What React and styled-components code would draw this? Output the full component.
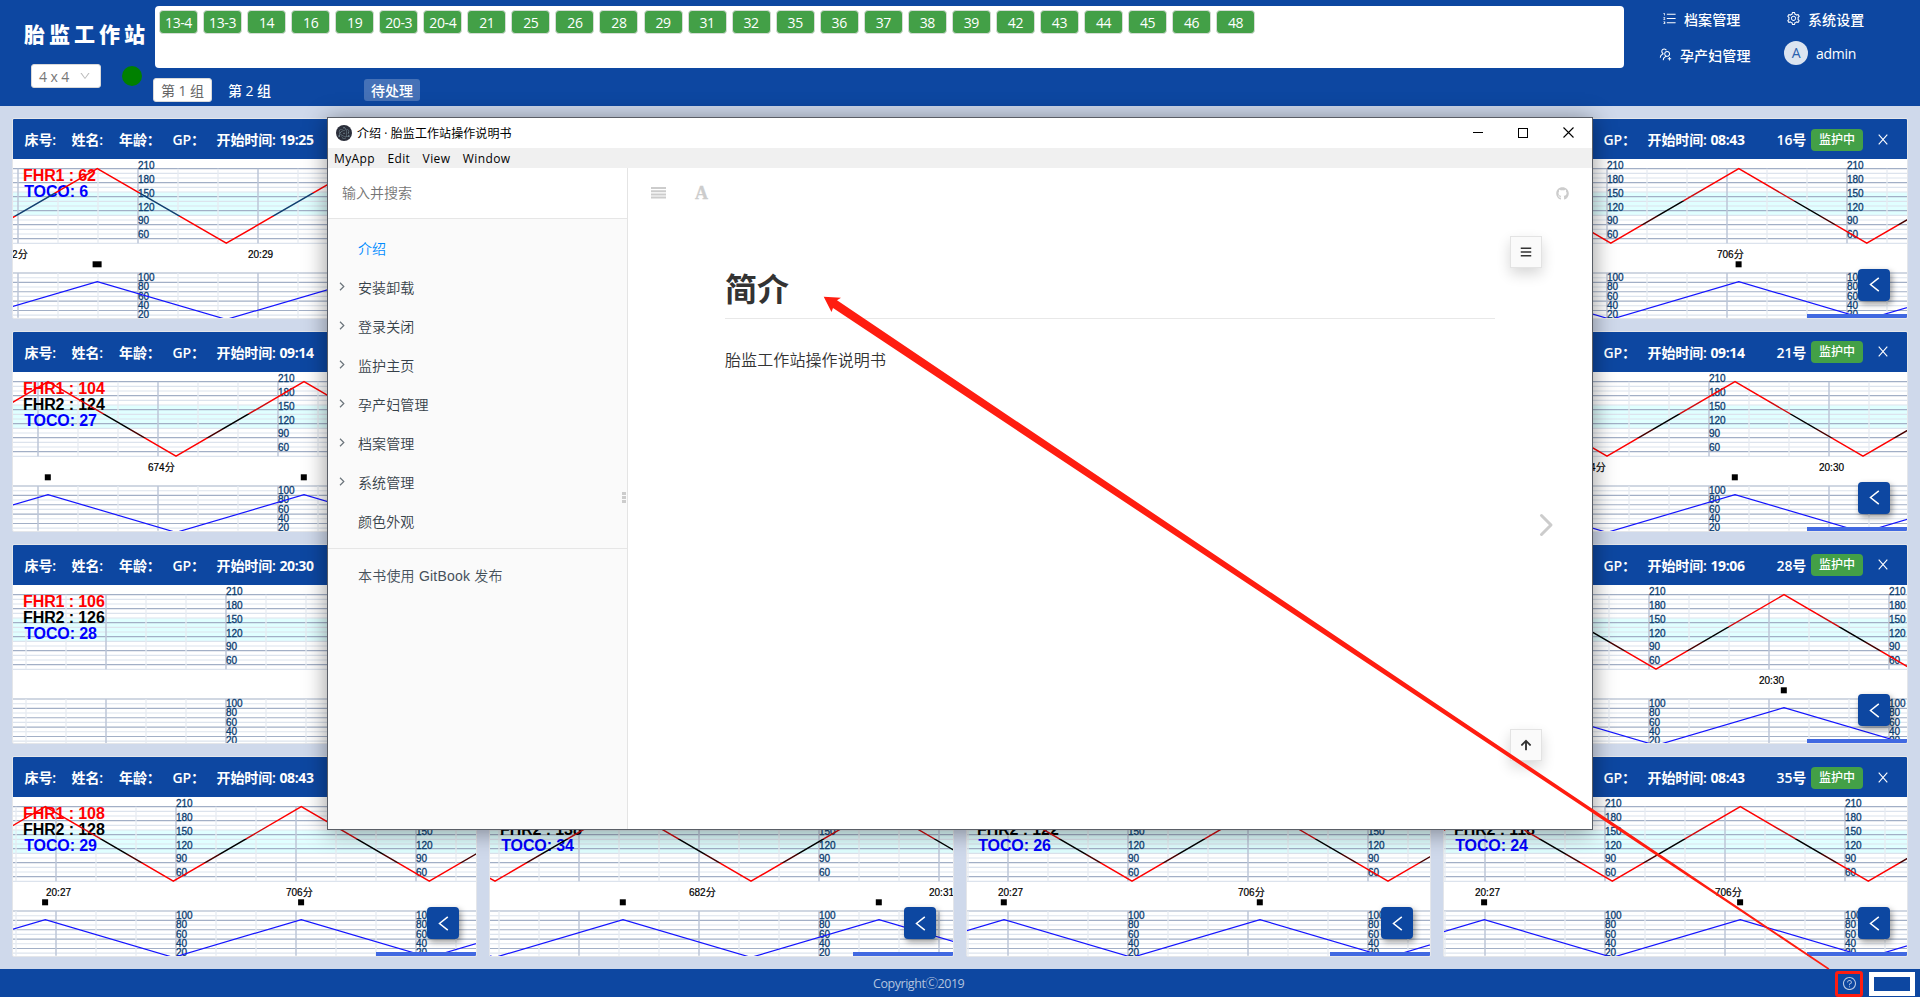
import React from 'react';
import styled, { createGlobalStyle, css } from 'styled-components';
import {
  AiOutlineOrderedList,
  AiOutlineSetting,
  AiOutlineUsergroupAdd,
  AiOutlineQuestionCircle,
  AiOutlineDown,
} from 'react-icons/ai';
import { FaGithub, FaBars, FaArrowUp } from 'react-icons/fa';
import { SiElectron } from 'react-icons/si';

const BLUE = '#0d47a1';
const GREEN = '#43a047';

const GlobalStyle = createGlobalStyle`
  *, *::before, *::after { box-sizing: border-box; }
  body {
    margin: 0;
    font-family: "Open Sans", "Noto Sans CJK SC", sans-serif;
    font-size: 14px;
    overflow: hidden;
  }
`;

const Page = styled.div`
  position: relative;
  width: 1920px;
  height: 997px;
  display: flex;
  flex-direction: column;
  background: #cfd9eb;
`;

/* ---------- header ---------- */

const Header = styled.header`
  height: 106px;
  flex: none;
  display: flex;
  background: ${BLUE};
  color: #fff;
`;

const Brand = styled.div`
  width: 155px;
  padding: 18px 0 0 24px;
`;

const BrandName = styled.div`
  height: 32px;
  line-height: 32px;
  font-size: 21px;
  font-weight: 900;
  letter-spacing: 4px;
  white-space: nowrap;
`;

const BrandTools = styled.div`
  display: flex;
  align-items: center;
  height: 24px;
  margin: 14px 0 0 7px;
`;

const LayoutSelect = styled.div`
  display: flex;
  align-items: center;
  justify-content: space-between;
  width: 70px;
  height: 24px;
  padding: 0 9px 0 7px;
  border: 1px solid #d9d9d9;
  border-radius: 3px;
  background: #fff;
  color: #777;
  letter-spacing: -0.1px;
  svg { color: #bbb; font-size: 12px; }
`;

const StatusDot = styled.span`
  width: 20px;
  height: 20px;
  margin-left: 21px;
  border-radius: 50%;
  background: #008000;
`;

const HeaderMain = styled.div`
  width: 1469px;
  padding-top: 6px;
`;

const TagBox = styled.div`
  display: flex;
  align-items: flex-start;
  gap: 5.05px;
  height: 62px;
  padding: 4px;
  border-radius: 4px;
  background: #fff;
`;

const BedTag = styled.span`
  width: 39px;
  height: 24px;
  border: 1px solid #d5dcd5;
  border-radius: 4px;
  background: ${GREEN};
  text-align: center;
  line-height: 24px;
  letter-spacing: -0.4px;
`;

const GroupRow = styled.div`
  display: flex;
  align-items: center;
  height: 24px;
  margin: 10px 0 0 -2px;
`;

const GroupTab = styled.span`
  width: 59px;
  height: 24px;
  line-height: 25px;
  text-align: center;
  border-radius: 3px;
  margin-right: 8px;
  white-space: nowrap;
  font-weight: 500;
  letter-spacing: -0.1px;
  ${(p) => p.$active && css`
    background: #fff;
    border: 1px solid #d9d9d9;
    line-height: 23px;
    color: #666;
    font-weight: 400;
  `}
`;

const PendingTag = styled.span`
  width: 56px;
  height: 22px;
  margin-left: 77px;
  border-radius: 3px;
  background: #4571b7;
  line-height: 24px;
  text-align: center;
  font-weight: 500;
`;

const Menu = styled.nav`
  display: grid;
  grid-template-columns: 127px 1fr;
  grid-template-rows: 35px 36px;
  padding-left: 35px;
  flex: 1;
`;

const MenuItem = styled.div`
  display: flex;
  align-items: center;
  gap: ${(p) => p.$gap || 7}px;
  padding-left: ${(p) => p.$inset || 0}px;
  padding-top: ${(p) => p.$drop || 0}px;
  margin-left: ${(p) => (p.$back ? -p.$back : 0)}px;
  font-weight: ${(p) => (p.$plain ? 400 : 500)};
  letter-spacing: ${(p) => (p.$plain ? -0.3 : 0.1)}px;
  svg { font-size: 15px; flex: none; margin-top: -1px; }
`;

const Avatar = styled.span`
  width: 24px;
  height: 24px;
  border-radius: 50%;
  background: #dbe4f0;
  color: #2a62ae;
  text-align: center;
  line-height: 24px;
  font-weight: 400;
`;

/* ---------- monitor cards ---------- */

const Board = styled.main`
  flex: 1;
  min-height: 0;
  display: grid;
  grid-template-columns: repeat(4, 465px);
  grid-template-rows: repeat(4, minmax(0, 1fr));
  gap: 12px;
  padding: 12px;
`;

const Card = styled.section`
  position: relative;
  display: flex;
  flex-direction: column;
  border: 1px solid #e4e6ea;
  border-radius: 2px;
  background: #fff;
  overflow: hidden;
`;

const CardHeader = styled.div`
  display: flex;
  align-items: center;
  height: 40px;
  flex: none;
  padding: 0 19px 0 11.5px;
  background: ${BLUE};
  color: #fff;
  font-weight: 600;
  white-space: nowrap;
  svg { flex: none; }
`;

const Field = styled.span`
  width: ${(p) => p.$w}px;
  flex: none;
  letter-spacing: -0.1px;
`;

const StartTime = styled.span`
  font-weight: 700;
  letter-spacing: -0.35px;
`;

const BedControls = styled.div`
  display: flex;
  align-items: center;
  flex: none;
  margin-left: auto;
`;

const BedNo = styled.span`
  padding-right: 5px;
  letter-spacing: -0.2px;
`;

const StateBadge = styled.span`
  width: 52px;
  height: 22px;
  flex: none;
  margin: 1px 15px 0 0;
  border-radius: 4px;
  background: ${GREEN};
  line-height: 22px;
  font-size: 12px;
  font-weight: 500;
  text-align: center;
`;

const ChartArea = styled.div`
  flex: 1;
  min-height: 0;
  svg { display: block; }
`;

const PanelToggle = styled.button`
  position: absolute;
  right: 17px;
  bottom: 17px;
  display: flex;
  align-items: center;
  justify-content: center;
  width: 32px;
  height: 32px;
  padding: 0;
  border: 0;
  border-radius: 4px;
  background: ${BLUE};
  box-shadow: 2px 3px 6px rgba(0, 0, 0, 0.4);
`;

const ProgressStrip = styled.div`
  position: absolute;
  right: 0;
  bottom: 0;
  width: 100px;
  height: 4px;
  background: #4169e1;
`;

const FHR_TOP = 9.7;
const FHR_LOW = 84.2;
const TOCO_TOP = 114;

const FHR_LABELS = [['210', 10.2], ['180', 24.2], ['150', 38.2], ['120', 52.2], ['90', 65.2], ['60', 79.2]];
const TOCO_LABELS = [['100', 122.2], ['80', 131.2], ['60', 141], ['40', 150], ['20', 159]];

function wavePoints(peaks, half, top, low) {
  const pts = [];
  peaks.forEach((p) => {
    pts.push(`${p - half},${low}`, `${p},${top}`, `${p + half},${low}`);
  });
  return pts.join(' ');
}

function Trace({ id, data }) {
  const { phase, labels, peaks, half = 128, times, stats, marker = 6 } = data;
  const verticals = [];
  for (let i = -3; i < 12; i += 1) {
    const x = phase + i * 40;
    if (x > 0 && x < 463) verticals.push({ x, major: i % 3 === 0 });
  }
  const single = stats.length === 2;
  return (
    <svg width="463" height="158.75" viewBox="0 0 463 158.75" fontFamily='"Liberation Sans", Arial, "Noto Sans CJK SC", sans-serif'>
      <defs>
        <linearGradient id={id} gradientUnits="userSpaceOnUse" x1="0" x2="0" y1={FHR_TOP} y2={FHR_LOW}>
          {single ? (
            <>
              <stop offset="0.32" stopColor="#f00" /><stop offset="0.32" stopColor="#123f70" />
              <stop offset="0.64" stopColor="#123f70" /><stop offset="0.64" stopColor="#f00" />
            </>
          ) : (
            <>
              <stop offset="0.27" stopColor="#f00" /><stop offset="0.27" stopColor="#d00c10" />
              <stop offset="0.43" stopColor="#d00c10" /><stop offset="0.43" stopColor="#000" />
              <stop offset="0.63" stopColor="#000" /><stop offset="0.63" stopColor="#480000" />
              <stop offset="0.76" stopColor="#480000" /><stop offset="0.76" stopColor="#f00" />
            </>
          )}
        </linearGradient>
      </defs>
      <rect x="0" y="33.2" width="463" height="23.3" fill="#e0ffff" />
      {Array.from({ length: 17 }, (_, i) => (
        <line key={`f${i}`} x1="0" x2="463" y1={9.7 + i * 4.667} y2={9.7 + i * 4.667}
          stroke={i % 3 === 0 ? '#a2afc6' : '#dce3ed'} strokeWidth={i % 3 === 0 ? 1.2 : 1.1} />
      ))}
      {Array.from({ length: 10 }, (_, i) => (
        <line key={`t${i}`} x1="0" x2="463" y1={TOCO_TOP + i * 4.68} y2={TOCO_TOP + i * 4.68}
          stroke={i % 2 === 0 ? '#a2afc6' : '#dce3ed'} strokeWidth="1.1" />
      ))}
      {verticals.map(({ x, major }) => (
        <g key={x} stroke={major ? '#bcc6d7' : '#e6ebf2'} strokeWidth={major ? 1.5 : 1.3}>
          <line x1={x} x2={x} y1={FHR_TOP} y2={FHR_LOW} />
          <line x1={x} x2={x} y1={TOCO_TOP} y2="158.75" />
        </g>
      ))}
      {labels.map((x) => (
        <g key={x} fill="#0b3d70" fontSize="10" stroke="#0b3d70" strokeWidth="0.3">
          {FHR_LABELS.map(([t, y]) => <text key={`f${t}`} x={x} y={y}>{t}</text>)}
          {TOCO_LABELS.map(([t, y]) => <text key={`t${t}`} x={x} y={y}>{t}</text>)}
        </g>
      ))}
      <g fill="#000" fontSize="10" stroke="#000" strokeWidth="0.2">
        {times.map(([t, x]) => <text key={t} x={x} y="99.4">{t}</text>)}
      </g>
      {stats.map(([t, c], i) => (
        <text key={t} x={t.startsWith('TOCO') ? 11.2 : 10} y={22 + i * 16} fill={c} fontSize="16"
          fontWeight="700" letterSpacing="-0.1" style={{ whiteSpace: 'pre' }}>{t}</text>
      ))}
      {peaks.length > 0 && (
        <>
          <polyline points={wavePoints(peaks, half, FHR_TOP, FHR_LOW)} fill="none" stroke={`url(#${id})`} strokeWidth="1.45" />
          <polyline points={wavePoints(peaks, half, 122.6, 160.4)} fill="none" stroke="#1414ff" strokeWidth="1.2" />
        </>
      )}
      {peaks.map((p) => (
        <rect key={p} x={p - marker / 2 - 0.2} y="102.3" width={marker} height="6" fill="#000" />
      ))}
    </svg>
  );
}

const readings = (f1, f2, toco) => [
  [`FHR1 : ${f1}`, '#f00'],
  ...(f2 ? [[`FHR2 : ${f2}`, '#000']] : []),
  [`TOCO: ${toco}`, '#00f'],
];

const CARDS = [
  { start: '19:25', phase: 125, labels: [125], peaks: [84.3, 342.3], half: 129, marker: 9, times: [['682分', -12], ['20:29', 235]], stats: readings(62, null, 6) },
  null,
  null,
  { start: '08:43', bed: '16号', phase: 163, labels: [163, 403], peaks: [38.8, 294.8, 550.8], times: [['706分', 273]], stats: readings(96, 116, 23) },
  { start: '09:14', phase: 145, labels: [265], peaks: [35, 291], times: [['674分', 135]], stats: readings(104, 124, 27) },
  null,
  null,
  { start: '09:14', bed: '21号', phase: 145, labels: [265], peaks: [35, 291, 547], times: [['674分', 135], ['20:30', 375]], stats: readings(104, 124, 27) },
  { start: '20:30', phase: 93, labels: [213], peaks: [], times: [], stats: readings(106, 126, 28) },
  null,
  null,
  { start: '19:06', bed: '28号', phase: 85, labels: [205, 445], peaks: [84, 340], times: [['20:30', 315]], stats: readings(106, 126, 28) },
  { start: '08:43', bed: '29号', phase: 43, labels: [163, 403], peaks: [32.3, 288.3, 544.3], times: [['20:27', 33], ['706分', 273]], stats: readings(108, 128, 29) },
  { start: '08:43', bed: '31号', phase: 89, labels: [329], peaks: [-123, 133, 389], times: [['682分', 199], ['20:31', 439]], stats: readings(118, 138, 34) },
  { start: '08:43', bed: '32号', phase: 41, labels: [161, 401], peaks: [37, 293, 549], times: [['20:27', 31], ['706分', 271]], stats: readings(102, 122, 26) },
  { start: '08:43', bed: '35号', phase: 41, labels: [161, 401], peaks: [40.3, 296.3, 552.3], times: [['20:27', 31], ['706分', 271]], stats: readings(98, 118, 24) },
];

const CloseMark = () => (
  <svg width="10" height="11" viewBox="0 0 10 11" stroke="#fff" strokeWidth="1.1" fill="none">
    <path d="M0.7 0.7 L9.3 10.3 M9.3 0.7 L0.7 10.3" />
  </svg>
);

const BackMark = () => (
  <svg width="11" height="15" viewBox="0 0 11 15" stroke="#fff" strokeWidth="1.5" fill="none">
    <path d="M9.8 0.8 L1.5 7.5 L9.8 14.2" />
  </svg>
);

function MonitorCard({ data, index }) {
  if (!data) return <Card />;
  return (
    <Card>
      <CardHeader>
        <Field $w={47}>床号:</Field>
        <Field $w={47.5}>姓名:</Field>
        <Field $w={53.5}>年龄：</Field>
        <Field $w={44}>GP：</Field>
        <Field $w={99}>开始时间: <StartTime>{data.start}</StartTime></Field>
        {data.bed && (
          <BedControls>
            <BedNo>{data.bed}</BedNo>
            <StateBadge>监护中</StateBadge>
            <CloseMark />
          </BedControls>
        )}
      </CardHeader>
      <ChartArea><Trace id={`trace${index}`} data={data} /></ChartArea>
      <ProgressStrip />
      <PanelToggle><BackMark /></PanelToggle>
    </Card>
  );
}

/* ---------- footer ---------- */

const Footer = styled.footer`
  height: 28px;
  flex: none;
  display: grid;
  grid-template-columns: 1829px 28px 46px;
  column-gap: 6px;
  align-items: center;
  background: ${BLUE};
`;

const Copyright = styled.span`
  padding-left: 873px;
  color: #b4c4df;
  font-size: 12.5px;
  letter-spacing: -0.45px;
  line-height: 28px;
`;

const CopyrightMark = styled.span`
  font-family: "Noto Sans CJK SC", sans-serif;
`;

const HelpBox = styled.span`
  display: flex;
  align-items: center;
  justify-content: center;
  width: 28px;
  height: 26px;
  border: 3px solid #ff1d10;
  border-radius: 3px;
  color: #b9c8e2;
  font-size: 15px;
`;

const CornerBox = styled.span`
  width: 46px;
  height: 24px;
  border: 5px solid #fff;
  background: ${BLUE};
`;

/* ---------- manual window ---------- */

const Window = styled.div`
  position: absolute;
  left: 327px;
  top: 117px;
  width: 1266px;
  height: 713px;
  display: flex;
  flex-direction: column;
  border: 1px solid #5a5e66;
  background: #fff;
  box-shadow: 0 2px 22px rgba(0, 0, 0, 0.42);
`;

const TitleBar = styled.div`
  display: flex;
  align-items: center;
  height: 30px;
  padding: 0 18px 1px 8px;
  font-size: 12px;
  letter-spacing: 0.08px;
  color: #000;
`;

const AppIcon = styled.span`
  display: flex;
  align-items: center;
  justify-content: center;
  width: 16px;
  height: 16px;
  margin-right: 5px;
  border-radius: 50%;
  background: #2b2e3a;
  color: #a8c8d0;
  font-size: 12px;
`;

const WindowControls = styled.div`
  display: flex;
  align-items: center;
  gap: 35px;
  margin-left: auto;
`;

const MenuBar = styled.div`
  display: flex;
  align-items: center;
  gap: 12.3px;
  height: 20px;
  padding-left: 6px;
  background: #f0f0f0;
  font-size: 12px;
  letter-spacing: 0.4px;
  color: #000;
`;

const Book = styled.div`
  flex: 1;
  display: flex;
  min-height: 0;
`;

const Sidebar = styled.aside`
  position: relative;
  width: 300px;
  border-right: 1px solid #e4e4e4;
  background: #fafafa;
  font-family: "Liberation Sans", "Noto Sans CJK SC", sans-serif;
  color: #364149;
  font-weight: 350;
`;

const SearchField = styled.div`
  height: 51px;
  padding-left: 14px;
  line-height: 51px;
  border-bottom: 1px solid #e6e6e6;
  background: #fff;
  color: #757575;
`;

const Summary = styled.ul`
  list-style: none;
  margin: 0;
  padding: 9px 0 0;
`;

const SummaryItem = styled.li`
  display: flex;
  align-items: center;
  height: 39px;
  padding-left: 11px;
  letter-spacing: 0.1px;
  color: ${(p) => (p.$active ? '#008cff' : '#364149')};
`;

const ChevronSlot = styled.span`
  width: 19px;
  display: flex;
`;

const Published = styled.div`
  margin-top: 8px;
  padding: 8px 0 0 30px;
  border-top: 1px solid #e6e6e6;
  line-height: 39px;
  color: #46515a;
  letter-spacing: 0.2px;
`;

const DragHandle = styled.div`
  position: absolute;
  right: 1px;
  top: 324px;
  display: flex;
  flex-direction: column;
  gap: 1px;
  span { width: 4px; height: 3px; background: #ccc; }
`;

const Reader = styled.div`
  position: relative;
  flex: 1;
  font-family: "Liberation Sans", "Noto Sans CJK SC", sans-serif;
`;

const Toolbar = styled.div`
  display: flex;
  align-items: center;
  height: 50px;
  padding: 0 23px;
  color: #ccc;
  font-size: 13px;
  svg:last-child { margin-left: auto; }
`;

const FontGlyph = styled.span`
  margin-left: 29px;
  font-family: "Liberation Serif", serif;
  font-size: 18px;
  font-weight: 700;
  -webkit-text-stroke: 0.3px #ccc;
`;

const Article = styled.article`
  width: 770px;
  margin: 46px 0 0 97px;
`;

const Heading = styled.h1`
  margin: 0;
  height: 55px;
  padding-top: 2px;
  border-bottom: 1px solid #e8e8e8;
  font-size: 32px;
  line-height: 48px;
  color: #333;
`;

const Paragraph = styled.p`
  margin: 29px 0 0;
  font-size: 16px;
  font-weight: 350;
  line-height: 26px;
  letter-spacing: 0.1px;
  color: #333;
`;

const FloatButton = styled.button`
  position: absolute;
  right: 50px;
  top: ${(p) => p.$top}px;
  width: 32px;
  height: 32px;
  display: flex;
  align-items: center;
  justify-content: center;
  padding: 0;
  border: 1px solid #e3e3e3;
  background: #fafafa;
  color: #333;
  font-size: 12px;
  box-shadow: 0 6px 14px rgba(0, 0, 0, 0.16);
`;

const NextPage = styled.svg`
  position: absolute;
  right: 38px;
  top: 345px;
`;

const Pointer = styled.svg`
  position: absolute;
  left: 0;
  top: 0;
  pointer-events: none;
`;

const BEDS = ['13-4', '13-3', '14', '16', '19', '20-3', '20-4', '21', '25', '26', '28', '29', '31', '32', '35', '36', '37', '38', '39', '42', '43', '44', '45', '46', '48'];

const CHAPTERS = [
  ['介绍', false], ['安装卸载', true], ['登录关闭', true], ['监护主页', true],
  ['孕产妇管理', true], ['档案管理', true], ['系统管理', true], ['颜色外观', false],
];

function ManualWindow() {
  return (
    <Window>
      <TitleBar>
        <AppIcon><SiElectron /></AppIcon>
        介绍 · 胎监工作站操作说明书
        <WindowControls>
          <svg width="10" height="11"><path d="M0 5.5H10" stroke="#000" /></svg>
          <svg width="10" height="10"><rect x="0.5" y="0.5" width="9" height="9" fill="none" stroke="#000" /></svg>
          <svg width="11" height="11"><path d="M0.5 0.5L10.5 10.5M10.5 0.5L0.5 10.5" stroke="#000" strokeWidth="1.1" /></svg>
        </WindowControls>
      </TitleBar>
      <MenuBar>
        <span>MyApp</span><span>Edit</span><span>View</span><span>Window</span>
      </MenuBar>
      <Book>
        <Sidebar>
          <SearchField>输入并搜索</SearchField>
          <Summary>
            {CHAPTERS.map(([name, nested], i) => (
              <SummaryItem key={name} $active={i === 0}>
                <ChevronSlot>
                  {nested && (
                    <svg width="6" height="9" fill="none" stroke="#6b747b" strokeWidth="1.2"><path d="M1 0.8L4.8 4.5L1 8.2" /></svg>
                  )}
                </ChevronSlot>
                {name}
              </SummaryItem>
            ))}
          </Summary>
          <Published>本书使用 GitBook 发布</Published>
          <DragHandle><span /><span /><span /></DragHandle>
        </Sidebar>
        <Reader>
          <Toolbar>
            <svg width="15" height="12" fill="#ccc"><path d="M0 0h15v2H0zM0 3.2h15v2H0zM0 6.4h15v2H0zM0 9.6h15v2H0z" /></svg>
            <FontGlyph>A</FontGlyph>
            <FaGithub />
          </Toolbar>
          <Article>
            <Heading>简介</Heading>
            <Paragraph>胎监工作站操作说明书</Paragraph>
          </Article>
          <FloatButton $top={68}><FaBars /></FloatButton>
          <NextPage width="15" height="24" fill="none" stroke="#ccc" strokeWidth="3" strokeLinecap="round" strokeLinejoin="round">
            <path d="M2.5 2.5L12 12L2.5 21.5" />
          </NextPage>
          <FloatButton $top={561}><FaArrowUp /></FloatButton>
        </Reader>
      </Book>
    </Window>
  );
}

export default function App() {
  return (
    <Page>
      <GlobalStyle />
      <Header>
        <Brand>
          <BrandName>胎监工作站</BrandName>
          <BrandTools>
            <LayoutSelect>4 x 4<AiOutlineDown /></LayoutSelect>
            <StatusDot />
          </BrandTools>
        </Brand>
        <HeaderMain>
          <TagBox>{BEDS.map((b) => <BedTag key={b}>{b}</BedTag>)}</TagBox>
          <GroupRow>
            <GroupTab $active>第 1 组</GroupTab>
            <GroupTab>第 2 组</GroupTab>
            <PendingTag>待处理</PendingTag>
          </GroupRow>
        </HeaderMain>
        <Menu>
          <MenuItem $inset={3} $drop={3}><AiOutlineOrderedList />档案管理</MenuItem>
          <MenuItem $drop={3}><AiOutlineSetting />系统设置</MenuItem>
          <MenuItem $gap={7} $drop={3} $back={1}><AiOutlineUsergroupAdd />孕产妇管理</MenuItem>
          <MenuItem $gap={8} $back={2} $plain><Avatar>A</Avatar>admin</MenuItem>
        </Menu>
      </Header>
      <Board>
        {CARDS.map((c, i) => <MonitorCard key={i} data={c} index={i} />)}
      </Board>
      <Footer>
        <Copyright>Copyright<CopyrightMark>Ⓒ</CopyrightMark>2019</Copyright>
        <HelpBox><AiOutlineQuestionCircle /></HelpBox>
        <CornerBox />
      </Footer>
      <ManualWindow />
      <Pointer width="1920" height="997">
        <polygon fill="#ff1d10" points="823.7,296.7 841,297.7 837,300.3 1829.5,968.5 1828,969.5 833,308 831.5,312" />
      </Pointer>
    </Page>
  );
}
